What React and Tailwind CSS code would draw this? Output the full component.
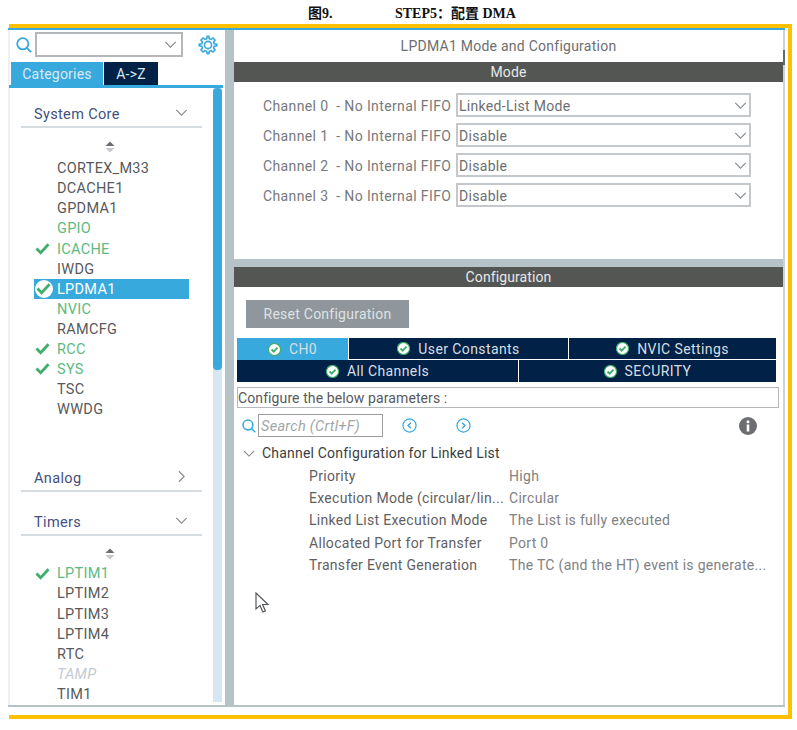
import React from "react";

const font = { fontFamily: "Roboto, 'Liberation Sans', sans-serif" };

function Chevron({ dir = "down", className = "" }) {
  const d = dir === "down" ? "M1 1l6 6 6-6" : "M1 1l6 6-6 6";
  const size = dir === "down" ? "w-[13px] h-[7px]" : "w-[7px] h-[13px] mr-[3px]";
  const box = dir === "down" ? "0 0 14 8" : "0 0 8 14";
  return (
    <svg viewBox={box} className={`${size} shrink-0 ${className}`} fill="none" stroke="#858a8e" strokeWidth="1.3">
      <path d={d} />
    </svg>
  );
}

function Check({ className = "" }) {
  return (
    <svg viewBox="0 0 16 14" className={`w-[15px] h-[13px] ${className}`} fill="none" stroke="#3fae6c" strokeWidth="3">
      <path d="M1.5 7l4.5 4.5L14.5 2.5" />
    </svg>
  );
}

function Magnifier({ size = 16 }) {
  return (
    <svg viewBox="0 0 16 16" width={size} height={size} fill="none" stroke="#38a9dc" strokeWidth="1.8" className="shrink-0">
      <circle cx="6.8" cy="6.8" r="5.6" />
      <path d="M10.8 10.8L15.2 15.2" />
    </svg>
  );
}

function Gear() {
  return (
    <svg viewBox="0 0 24 24" className="w-[20px] h-[20px]" fill="none" stroke="#38a9dc" strokeWidth="2">
      <path d="M12.9 1.5h-1.8l-.6 3-1.9.8L6 3.6 3.6 6l1.7 2.6-.8 1.9-3 .6v1.8l3 .6.8 1.9L3.6 18 6 20.4l2.6-1.7 1.9.8.6 3h1.8l.6-3 1.9-.8 2.6 1.7 2.4-2.4-1.7-2.6.8-1.9 3-.6v-1.8l-3-.6-.8-1.9L20.4 6 18 3.6l-2.6 1.7-1.9-.8z" />
      <circle cx="12" cy="12" r="4.3" />
    </svg>
  );
}

function Sort() {
  return (
    <svg viewBox="0 0 10 12" className="w-[10px] h-[12px] block">
      <path d="M5 0.5L9.5 5H0.5z" fill="#6a6d70" />
      <path d="M0.5 7H9.5L5 11.5z" fill="#c4c7c9" />
    </svg>
  );
}

function TabCheck() {
  return (
    <svg viewBox="0 0 14 14" className="w-[13px] h-[13px] shrink-0" fill="none">
      <circle cx="7" cy="7" r="6.5" fill="#ffffff" stroke="#3fae6c" strokeWidth="1.2" />
      <path d="M3.8 7l2.3 2.3 4.2-4.4" stroke="#3fae6c" strokeWidth="2" />
    </svg>
  );
}

function CircleArrow({ dir }) {
  return (
    <svg viewBox="0 0 16 16" className="w-[15px] h-[15px] shrink-0" fill="none" stroke="#38a9dc" strokeWidth="1.3">
      <circle cx="8" cy="8" r="7" />
      <path d={dir === "left" ? "M9.5 5L6.5 8l3 3" : "M6.5 5l3 3-3 3"} strokeWidth="1.6" />
    </svg>
  );
}

function Section({ title, dir = "down", className = "" }) {
  return (
    <div className={`ml-[11px] w-[181px] h-[27px] pl-[13px] pr-[14px] flex items-center justify-between border-b-2 border-[#d5dde1] text-[14.5px] tracking-[0.35px] text-[#43507f] ${className}`}>
      <span className="mt-[2px]">{title}</span>
      <span className="-mt-[3px]">
        <Chevron dir={dir} />
      </span>
    </div>
  );
}

function Item({ name, kind }) {
  const selected = kind === "selected";
  const green = kind === "green" || kind === "check";
  const color = selected ? "text-white" : green ? "text-[#5dba82]" : kind === "off" ? "text-[#c3cad0] italic" : "text-[#58595b]";
  return (
    <div className={`h-[20.1px] ml-[24px] w-[155px] flex items-center text-[14.5px] tracking-[0.3px] ${selected ? "bg-[#38a9dc]" : ""} ${color}`}>
      <div className="w-[23px] flex justify-center shrink-0">
        {kind === "check" && <Check className="ml-[-6px]" />}
        {selected && (
          <span className="ml-[-4px] w-[18px] h-[18px] rounded-full bg-white flex items-center justify-center">
            <Check />
          </span>
        )}
      </div>
      <span className="mt-[2px]">{name}</span>
    </div>
  );
}

const core = [
  ["CORTEX_M33"], ["DCACHE1"], ["GPDMA1"], ["GPIO", "green"], ["ICACHE", "check"], ["IWDG"],
  ["LPDMA1", "selected"], ["NVIC", "green"], ["RAMCFG"], ["RCC", "check"], ["SYS", "check"], ["TSC"], ["WWDG"],
];
const timers = [["LPTIM1", "check"], ["LPTIM2"], ["LPTIM3"], ["LPTIM4"], ["RTC"], ["TAMP", "off"], ["TIM1"]];
const channels = [["Channel 0", "Linked-List Mode"], ["Channel 1", "Disable"], ["Channel 2", "Disable"], ["Channel 3", "Disable"]];
const params = [
  ["Priority", "High"],
  ["Execution Mode (circular/lin...", "Circular"],
  ["Linked List Execution Mode", "The List is fully executed"],
  ["Allocated Port for Transfer", "Port 0"],
  ["Transfer Event Generation", "The TC (and the HT) event is generate..."],
];

function Bar({ children }) {
  return (
    <div className="h-[20px] bg-[#545654] text-[#e8e8e8] text-[14px] tracking-[0.1px] flex items-center justify-center">{children}</div>
  );
}

function Tab({ children, active, className = "" }) {
  return (
    <div className={`flex items-center justify-center gap-[8px] text-[14px] tracking-[0.4px] text-[#d9dee3] ${active ? "bg-[#38a9dc]" : "bg-[#012147]"} ${className}`}>
      <TabCheck />
      <span className="mt-px">{children}</span>
    </div>
  );
}

export default function App() {
  return (
    <div className="relative w-[797px] h-[730px] bg-white overflow-hidden" style={font}>
      <div className="h-[24px] pl-[308px] pt-[2px] flex items-center text-[14px] font-bold text-[#111]" style={{ fontFamily: "'Liberation Serif', 'Noto Sans CJK SC', serif" }}>
        <span className="w-[87px]">图9.</span>
        <span>STEP5：配置 DMA</span>
      </div>

      <div className="ml-[9px] w-[783px] h-[695px] border-y-4 border-r-4 border-[#ffc000]">
        <div className="-ml-px w-[777px] h-[2px] bg-[#38a9dc]" />
        <div className="-ml-px w-[777px] h-[677px] flex border-b-2 border-[#b5c2c8] overflow-hidden">
          {/* Sidebar */}
          <div className="w-[217px] shrink-0 flex flex-col border-l-2 border-[#eef1f3]">
            <div className="h-[27px] pt-[2px] pl-[6px] flex items-center shrink-0">
              <Magnifier />
              <div className="ml-[3px] w-[148px] h-[25px] border-2 border-[#b4b8bb] flex items-center justify-end pr-[4px]">
                <Chevron />
              </div>
              <div className="ml-[15px]">
                <Gear />
              </div>
            </div>
            <div className="mt-[5px] ml-px flex h-[23px] shrink-0 text-[14px] tracking-[0.2px] text-[#dbe9f3]">
              <div className="w-[92px] bg-[#38a9dc] flex items-center justify-center pt-[2px]">Categories</div>
              <div className="ml-px w-[54px] bg-[#012147] flex items-center justify-center pt-[2px]">A-&gt;Z</div>
            </div>
            <div className="-ml-px w-[214px] h-[3px] bg-[#38a9dc] shrink-0" />
            <div className="flex flex-1 min-h-0">
              <div className="w-[203px] shrink-0 overflow-hidden">
                <Section title="System Core" className="mt-[13px]" />
                <div className="mt-[13px] flex justify-center ml-[-3px]"><Sort /></div>
                <div className="mt-[5px]">
                  {core.map(([n, k]) => <Item key={n} name={n} kind={k} />)}
                </div>
                <Section title="Analog" dir="right" className="mt-[46px]" />
                <Section title="Timers" className="mt-[17px]" />
                <div className="mt-[12px] flex justify-center ml-[-3px]"><Sort /></div>
                <div className="mt-[3px]">
                  {timers.map(([n, k]) => <Item key={n} name={n} kind={k} />)}
                </div>
              </div>
              <div className="w-[9px] mb-[3px] bg-[#d6e6f3] shrink-0">
                <div className="h-[282px] bg-[#38a9dc] rounded-[4px]" />
              </div>
            </div>
          </div>

          {/* Gutter */}
          <div className="w-[9px] bg-[#b5c2c8] shrink-0" />

          {/* Main */}
          <div className="w-[549px] shrink-0 flex flex-col bg-[#b5c2c8]">
            <div className="h-[229px] bg-white shrink-0">
              <div className="h-[32px] pt-px flex items-center justify-center text-[14px] tracking-[0.25px] text-[#6d6e70]">LPDMA1 Mode and Configuration</div>
              <Bar>Mode</Bar>
              <div className="pt-[11px] flex flex-col gap-[6px]">
                {channels.map(([c, v]) => (
                  <div key={c} className="flex items-center h-[24px] pl-[29px]">
                    <div className="w-[193px] shrink-0 pt-[2px] text-[14px] tracking-[0.38px] text-[#77797b] whitespace-pre">{c}  - No Internal FIFO</div>
                    <div className="w-[295px] h-[24px] border-2 border-[#c4c8ca] flex items-center justify-between pl-px pr-[2px] text-[14px] tracking-[0.3px] text-[#6d6e70]">
                      <span className="mt-[2px]">{v}</span>
                      <Chevron />
                    </div>
                  </div>
                ))}
              </div>
            </div>
            <div className="mt-[8px] flex-1 bg-white">
              <Bar>Configuration</Bar>
              <div className="mt-[13px] ml-[12px] w-[163px] h-[28px] pt-px bg-[#8f969c] flex items-center justify-center text-[14px] tracking-[0.25px] text-[#dfe2e4]">Reset Configuration</div>
              <div className="mt-[10px] ml-[3px] w-[539px]">
                <div className="flex h-[21px]">
                  <Tab active className="w-[111px] h-[22px]">CH0</Tab>
                  <Tab className="ml-px w-[219px]">User Constants</Tab>
                  <Tab className="ml-px w-[207px]">NVIC Settings</Tab>
                </div>
                <div className="flex h-[22px] mt-px">
                  <Tab className="w-[281px]">All Channels</Tab>
                  <Tab className="ml-px w-[257px]">SECURITY</Tab>
                </div>
              </div>
              <div className="mt-[5px] ml-[3px] w-[542px] h-[21px] pt-[2px] border border-[#b4b8bb] flex items-center text-[14px] tracking-[0.1px] text-[#58595b]">Configure the below parameters :</div>
              <div className="mt-[6px] h-[23px] pl-[8px] flex items-center">
                <Magnifier size={14} />
                <div className="ml-[2px] w-[125px] h-[23px] pt-[2px] border border-[#9a9d9f] flex items-center pl-[2px] text-[14.5px] tracking-[0.3px] italic text-[#a2a5a8]">Search (Crtl+F)</div>
                <div className="ml-[19px]"><CircleArrow dir="left" /></div>
                <div className="ml-[39px]"><CircleArrow dir="right" /></div>
                <svg viewBox="0 0 18 18" className="ml-[268px] w-[18px] h-[18px] shrink-0">
                  <circle cx="9" cy="9" r="9" fill="#6d6e71" />
                  <circle cx="9" cy="4.8" r="1.5" fill="#fff" />
                  <rect x="7.7" y="7.5" width="2.6" height="7" fill="#fff" />
                </svg>
              </div>
              <div className="mt-[6px] h-[20px] pl-[9px] flex items-center text-[14px] tracking-[0.2px] text-[#3d3e40]">
                <Chevron className="!w-[12px] !h-[7px]" />
                <span className="ml-[7px] mt-px">Channel Configuration for Linked List</span>
              </div>
              <div className="mt-px pl-[75px]">
                {params.map(([k, v]) => (
                  <div key={k} className="h-[22.3px] pt-[2px] flex items-center text-[14px] tracking-[0.3px]">
                    <span className="w-[200px] shrink-0 text-[#5f6062] whitespace-nowrap">{k}</span>
                    <span className="text-[#808183] whitespace-nowrap">{v}</span>
                  </div>
                ))}
              </div>
            </div>
          </div>
          <div className="w-[2px] bg-[#c9d3d8] shrink-0">
            <div className="mt-[20px] h-[15px] bg-[#5d6a70]" />
          </div>
        </div>
      </div>

      {/* Mouse pointer over the page */}
      <svg viewBox="0 0 16 22" className="absolute left-[255px] top-[592px] w-[16px] h-[22px]" fill="#fff" stroke="#55585b" strokeWidth="1.2">
        <path d="M1 1v16l4-3.6 2.8 6.6 2.6-1.1-2.8-6.4h5.4z" />
      </svg>
    </div>
  );
}
